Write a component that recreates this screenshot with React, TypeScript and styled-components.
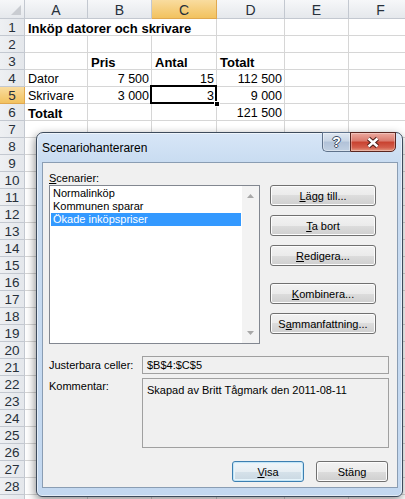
import styled, { createGlobalStyle, css } from 'styled-components';

const GlobalStyle = createGlobalStyle`
  * {
    box-sizing: border-box;
  }
  html,
  body {
    margin: 0;
    padding: 0;
    background: #ffffff;
  }
  body {
    font-family: "Liberation Sans", Arial, sans-serif;
    overflow: hidden;
  }
`;

const Screen = styled.div`
  position: relative;
  width: 405px;
  height: 499px;
  overflow: hidden;
  background: #ffffff;
`;

/* ---------- spreadsheet ---------- */

const Sheet = styled.div`
  display: grid;
  grid-template-columns: 25px 63px 64px 65px 68px 64px 64px;
  grid-template-rows: 19px;
  grid-auto-rows: 17px;
`;

const headerBase = css`
  display: flex;
  align-items: center;
  justify-content: center;
  color: #27303a;
  border-right: 1px solid #c3c8d0;
  border-bottom: 1px solid #c3c8d0;
`;

const selectedHeader = css`
  background: linear-gradient(#f9dc9f, #f2c25f);
  border-right-color: #e0a84f;
  border-bottom-color: #e0a84f;
`;

const Corner = styled.div`
  ${headerBase};
  justify-content: flex-end;
  align-items: flex-end;
  padding: 0 3px 3px 0;
  background: linear-gradient(#f6f7f9, #e5e8ec);
`;

const ColHeader = styled.div<{ $selected?: boolean }>`
  ${headerBase};
  font-size: 14px;
  padding-top: 1px;
  background: linear-gradient(#f6f7f9, #e5e8ec);
  ${({ $selected }) => $selected && selectedHeader};
`;

const RowHeader = styled.div<{ $selected?: boolean }>`
  ${headerBase};
  font-size: 13.5px;
  padding-top: 1px;
  background: linear-gradient(90deg, #eef0f3, #e4e7eb);
  ${({ $selected }) => $selected && selectedHeader};
`;

const Cell = styled.div<{ $bold?: boolean; $right?: boolean; $span?: number }>`
  position: relative;
  grid-column: span ${({ $span }) => $span ?? 1};
  padding: 2px 2px 0 3px;
  border-right: 1px solid #d6d6d6;
  border-bottom: 1px solid #d6d6d6;
  font-size: ${({ $bold }) => ($bold ? '13px' : '12.5px')};
  font-weight: ${({ $bold }) => ($bold ? 700 : 400)};
  line-height: 15px;
  text-align: ${({ $right }) => ($right ? 'right' : 'left')};
  white-space: nowrap;
  color: #000000;
`;

const ActiveFrame = styled.span`
  position: absolute;
  left: -2px;
  top: -2px;
  right: -1px;
  bottom: -1px;
  border: 2px solid #000000;
  z-index: 2;
  pointer-events: none;
`;

const FillHandle = styled.span`
  position: absolute;
  right: -4px;
  bottom: -4px;
  width: 6px;
  height: 6px;
  background: #000000;
  border: 1px solid #ffffff;
  z-index: 3;
`;

type CellData = {
  text?: string;
  bold?: boolean;
  right?: boolean;
  span?: number;
  active?: boolean;
};

const columns = ['A', 'B', 'C', 'D', 'E', 'F'];

const filled: CellData[][] = [
  [{ text: 'Inköp datorer och skrivare', bold: true, span: 3 }, {}, {}, {}],
  [{}, {}, {}, {}, {}, {}],
  [{}, { text: 'Pris', bold: true }, { text: 'Antal', bold: true }, { text: 'Totalt', bold: true }, {}, {}],
  [
    { text: 'Dator' },
    { text: '7 500', right: true },
    { text: '15', right: true },
    { text: '112 500', right: true },
    {},
    {},
  ],
  [
    { text: 'Skrivare' },
    { text: '3 000', right: true },
    { text: '3', right: true, active: true },
    { text: '9 000', right: true },
    {},
    {},
  ],
  [{ text: 'Totalt', bold: true }, {}, {}, { text: '121 500', right: true }, {}, {}],
];

// 28 numbered rows, plus the top sliver of row 29 at the bottom edge
const rows: CellData[][] = Array.from({ length: 29 }, (_, i) =>
  filled[i] ?? [{}, {}, {}, {}, {}, {}]
);

/* ---------- dialog ---------- */

const Dialog = styled.div`
  position: absolute;
  left: 36px;
  top: 132px;
  width: 367px;
  height: 365px;
  display: flex;
  flex-direction: column;
  padding: 0 4px 8px 5px;
  border: 1px solid #3d4b5c;
  border-radius: 7px 7px 6px 6px;
  background: linear-gradient(180deg, #d7e6f7 0px, #c9dcf1 29px, #c3d8f0 100%);
  box-shadow: inset 0 0 0 1px rgba(255, 255, 255, 0.55), -1px 3px 10px rgba(0, 0, 0, 0.45);
  font-family: "Liberation Sans", Arial, sans-serif;
  z-index: 5;
`;

const TitleBar = styled.div`
  display: flex;
  height: 29px;
  flex-shrink: 0;
`;

const Title = styled.span`
  align-self: center;
  font-size: 12px;
  color: #000000;
  padding-top: 1px;
`;

const CaptionButtons = styled.div`
  display: flex;
  margin-left: auto;
  margin-top: -1px;
  margin-right: 2px;
  height: 20px;
`;

const HelpButton = styled.div`
  width: 28px;
  height: 20px;
  display: flex;
  align-items: center;
  justify-content: center;
  border: 1px solid #5f728b;
  border-right: none;
  border-radius: 0 0 0 5px;
  background: linear-gradient(#dfe7f1 0%, #c8d5e5 45%, #b1c2d8 50%, #c1d0e2 100%);
  box-shadow: inset 0 0 0 1px rgba(255, 255, 255, 0.4);
  font-size: 14px;
  font-weight: 700;
  color: #ffffff;
  text-shadow: 1px 0 0 #3d4d63, -1px 0 0 #3d4d63, 0 1px 0 #3d4d63, 0 -1px 0 #3d4d63;
`;

const CloseButton = styled.div`
  width: 46px;
  height: 20px;
  display: flex;
  align-items: center;
  justify-content: center;
  border: 1px solid #5a2620;
  border-radius: 0 0 5px 0;
  background: linear-gradient(#eca99f 0%, #da7a6d 45%, #c8412f 50%, #d35d4b 80%, #e49a82 100%);
  box-shadow: inset 0 0 0 1px rgba(255, 255, 255, 0.3);
`;

const Panel = styled.div`
  flex: 1;
  display: flex;
  flex-direction: column;
  padding: 8px 7px 5px 6px;
  border: 1px solid #8a9db3;
  background: #f0f0f0;
  font-size: 11px;
  color: #000000;
`;

const ScenarioArea = styled.div`
  display: grid;
  grid-template-columns: 211px 106px;
  grid-template-rows: 14px 159px;
  column-gap: 10px;
`;

const Label = styled.span`
  line-height: 14px;
  white-space: nowrap;
`;

const Key = styled.span`
  text-decoration: underline;
`;

const ListBox = styled.div`
  grid-row: 2;
  display: flex;
  border: 1px solid #828790;
  background: #ffffff;
`;

const ListItems = styled.ul`
  flex: 1;
  margin: 0;
  padding: 1px;
  list-style: none;
`;

const ListItem = styled.li<{ $selected?: boolean }>`
  height: 13px;
  line-height: 13px;
  padding-left: 2px;
  white-space: nowrap;
  ${({ $selected }) =>
    $selected &&
    css`
      background: #3399ff;
      color: #ffffff;
    `};
`;

const ScrollBar = styled.div`
  width: 17px;
  display: flex;
  flex-direction: column;
  justify-content: space-between;
  align-items: center;
  padding: 8px 0 8px;
  background: #f3f3f3;
`;

const ButtonStack = styled.div`
  grid-row: 2;
  grid-column: 2;
  display: flex;
  flex-direction: column;
  gap: 9px;
`;

const Button = styled.button<{ $width?: number; $default?: boolean; $spaced?: boolean }>`
  width: ${({ $width }) => ($width ? `${$width}px` : '100%')};
  height: 21px;
  padding: 0;
  margin-top: ${({ $spaced }) => ($spaced ? '8px' : '0')};
  border: 1px solid #707070;
  border-radius: 3px;
  background: linear-gradient(#f2f2f2 0%, #ebebeb 50%, #dddddd 50%, #cfcfcf 100%);
  box-shadow: inset 0 0 0 1px #fcfcfc;
  font-family: "Liberation Sans", Arial, sans-serif;
  font-size: 11px;
  color: #000000;
  ${({ $default }) =>
    $default &&
    css`
      border-color: #3c7fb1;
      box-shadow: inset 0 0 0 1px #c4e5f6, inset 0 0 0 2px #e6f4fb;
      background: linear-gradient(#f1f6f9 0%, #e6eef3 50%, #d6e2ea 50%, #c9d8e2 100%);
    `};
`;

const Fields = styled.div`
  display: grid;
  grid-template-columns: 93px 247px;
  grid-template-rows: 18px 70px;
  row-gap: 4px;
  margin-top: 12px;
`;

const FieldLabel = styled.span<{ $top?: boolean }>`
  align-self: ${({ $top }) => ($top ? 'start' : 'center')};
  padding-top: ${({ $top }) => ($top ? '1px' : '0')};
  line-height: 14px;
  white-space: nowrap;
`;

const Field = styled.div<{ $tall?: boolean }>`
  border: 1px solid #a0a0a0;
  background: #f0f0f0;
  padding: ${({ $tall }) => ($tall ? '4px 4px' : '0 4px')};
  line-height: ${({ $tall }) => ($tall ? '14px' : '16px')};
  white-space: nowrap;
`;

const Footer = styled.div`
  display: flex;
  justify-content: flex-end;
  gap: 12px;
  margin-top: 13px;
  padding-right: 2px;
`;

function CornerTriangle() {
  return (
    <svg width="10" height="10" viewBox="0 0 10 10">
      <polygon points="10,0 10,10 0,10" fill="#c9ccd1" />
    </svg>
  );
}

function CloseGlyph() {
  return (
    <svg width="16" height="13" viewBox="0 0 16 13">
      <path d="M3.5 2.5 L12.5 10.5 M12.5 2.5 L3.5 10.5" stroke="#4a1d17" strokeWidth="4.4" />
      <path d="M3.5 2.5 L12.5 10.5 M12.5 2.5 L3.5 10.5" stroke="#ffffff" strokeWidth="2.4" />
    </svg>
  );
}

function Arrow({ down }: { down?: boolean }) {
  return (
    <svg width="7" height="4" viewBox="0 0 7 4">
      <polygon points={down ? '0,0 7,0 3.5,4' : '0,4 7,4 3.5,0'} fill="#a8a8a8" />
    </svg>
  );
}

function ScenarioDialog() {
  return (
    <Dialog>
      <TitleBar>
        <Title>Scenariohanteraren</Title>
        <CaptionButtons>
          <HelpButton>?</HelpButton>
          <CloseButton>
            <CloseGlyph />
          </CloseButton>
        </CaptionButtons>
      </TitleBar>
      <Panel>
        <ScenarioArea>
          <Label>
            <Key>S</Key>cenarier:
          </Label>
          <ListBox>
            <ListItems>
              <ListItem>Normalinköp</ListItem>
              <ListItem>Kommunen sparar</ListItem>
              <ListItem $selected>Ökade inköpspriser</ListItem>
            </ListItems>
            <ScrollBar>
              <Arrow />
              <Arrow down />
            </ScrollBar>
          </ListBox>
          <ButtonStack>
            <Button>
              <Key>L</Key>ägg till...
            </Button>
            <Button>
              <Key>T</Key>a bort
            </Button>
            <Button>
              <Key>R</Key>edigera...
            </Button>
            <Button $spaced>
              <Key>K</Key>ombinera...
            </Button>
            <Button>
              S<Key>a</Key>mmanfattning...
            </Button>
          </ButtonStack>
        </ScenarioArea>
        <Fields>
          <FieldLabel>Justerbara celler:</FieldLabel>
          <Field>$B$4:$C$5</Field>
          <FieldLabel $top>Kommentar:</FieldLabel>
          <Field $tall>Skapad av Britt Tågmark den 2011-08-11</Field>
        </Fields>
        <Footer>
          <Button $width={72} $default>
            <Key>V</Key>isa
          </Button>
          <Button $width={72}>Stäng</Button>
        </Footer>
      </Panel>
    </Dialog>
  );
}

export default function App() {
  return (
    <Screen>
      <GlobalStyle />
      <Sheet>
        <Corner>
          <CornerTriangle />
        </Corner>
        {columns.map((c) => (
          <ColHeader key={c} $selected={c === 'C'}>
            {c}
          </ColHeader>
        ))}
        {rows.map((cells, r) => [
          <RowHeader key={`h${r}`} $selected={r === 4}>
            {r < 28 ? r + 1 : ''}
          </RowHeader>,
          ...cells.map((cell, c) => (
            <Cell
              key={`c${r}-${c}`}
              $bold={cell.bold}
              $right={cell.right}
              $span={cell.span}
            >
              {cell.text}
              {cell.active && (
                <>
                  <ActiveFrame />
                  <FillHandle />
                </>
              )}
            </Cell>
          )),
        ])}
      </Sheet>
      <ScenarioDialog />
    </Screen>
  );
}
